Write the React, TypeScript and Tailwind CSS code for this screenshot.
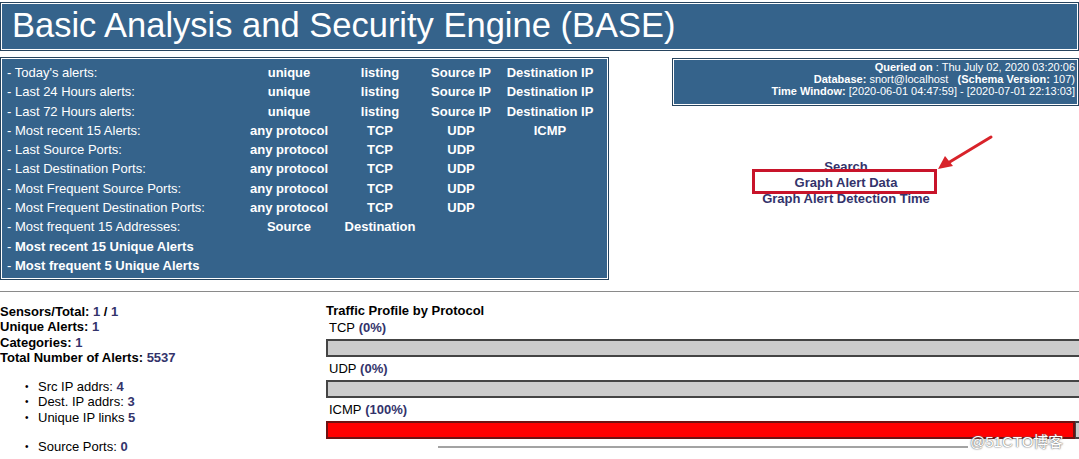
// BASE main page
const menuRows: { label: string; strong?: boolean; cols: string[] }[] = [
  { label: "Today's alerts:", cols: ["unique", "listing", "Source IP", "Destination IP"] },
  { label: "Last 24 Hours alerts:", cols: ["unique", "listing", "Source IP", "Destination IP"] },
  { label: "Last 72 Hours alerts:", cols: ["unique", "listing", "Source IP", "Destination IP"] },
  { label: "Most recent 15 Alerts:", cols: ["any protocol", "TCP", "UDP", "ICMP"] },
  { label: "Last Source Ports:", cols: ["any protocol", "TCP", "UDP"] },
  { label: "Last Destination Ports:", cols: ["any protocol", "TCP", "UDP"] },
  { label: "Most Frequent Source Ports:", cols: ["any protocol", "TCP", "UDP"] },
  { label: "Most Frequent Destination Ports:", cols: ["any protocol", "TCP", "UDP"] },
  { label: "Most frequent 15 Addresses:", cols: ["Source", "Destination"] },
  { label: "Most recent 15 Unique Alerts", strong: true, cols: [] },
  { label: "Most frequent 5 Unique Alerts", strong: true, cols: [] },
];

function Bar({ label, pct, full }: { label: string; pct: string; full?: boolean }) {
  return (
    <div>
      <div className="h-[23px] flex items-center pl-[3px] text-[13px]">
        {label}&nbsp;<span className="font-bold text-[#33336b]">({pct})</span>
      </div>
      {full ? (
        <div className="flex h-[18px]">
          <div className="w-[749px] bg-[#ff0000] border-2 border-[#6e1212]"></div>
          <div className="flex-1 bg-[#cccccc] border-y-2 border-l border-[#444]"></div>
        </div>
      ) : (
        <div className="h-[18px] bg-[#cccccc] border-y-2 border-l-2 border-[#444]"></div>
      )}
    </div>
  );
}

export default function App() {
  return (
    <div
      className="relative w-[1079px] h-[459px] overflow-hidden bg-white text-black"
      style={{ fontFamily: '"Liberation Sans", Arial, sans-serif' }}
    >
      {/* title bar */}
      <div className="pt-[2px]">
        <div className="border border-[#27445e] p-px bg-white">
          <div className="bg-[#35638b] h-[45px] flex items-center pl-[10px] pb-[2px] text-white text-[34.5px] leading-none">
            Basic Analysis and Security Engine (BASE)
          </div>
        </div>
      </div>

      <div className="flex mt-[6px]">
        {/* menu */}
        <div className="w-[609px] border border-[#27445e] p-px bg-white">
          <div className="h-[219px] bg-[#35638b] pt-[4px] text-white text-[13px]">
            {menuRows.map((r) => (
              <div key={r.label} className="grid grid-cols-[242px_90px_92px_70px_108px] h-[19.3px] items-center">
                <div className="pl-[5px] whitespace-nowrap">
                  - <span className={r.strong ? "font-bold" : ""}>{r.label}</span>
                </div>
                {r.cols.map((c) => (
                  <div key={c} className="text-center font-bold whitespace-nowrap">
                    {c}
                  </div>
                ))}
              </div>
            ))}
          </div>
        </div>

        {/* info + links */}
        <div className="flex-1 pl-[63px]">
          <div className="mt-[1px] border border-[#27445e] p-px bg-white">
            <div className="h-[44px] bg-[#35638b] text-white text-[11px] leading-[12px] text-right pr-[2px] pt-[1px]">
              <div>
                <b>Queried on</b> : Thu July 02, 2020 03:20:06
              </div>
              <div>
                <b>Database:</b> snort@localhost &nbsp; <b>(Schema Version:</b> 107)
              </div>
              <div>
                <b>Time Window:</b> [2020-06-01 04:47:59] - [2020-07-01 22:13:03]
              </div>
            </div>
          </div>
          <div className="mt-[53px] pr-[59px] text-center text-[13px] leading-[16px] font-bold text-[#33336b]">
            <div>Search</div>
            <div>Graph Alert Data</div>
            <div>Graph Alert Detection Time</div>
          </div>
        </div>
      </div>

      <div className="mt-[11px] h-px bg-[#8a8a8a]"></div>

      <div className="flex pt-[11px]">
        <div className="w-[326px] mt-px text-[13px] leading-[15.3px]">
          <div className="font-bold">
            <div>
              Sensors/Total: <span className="text-[#33336b]">1</span> / <span className="text-[#33336b]">1</span>
            </div>
            <div>
              Unique Alerts: <span className="text-[#33336b]">1</span>
            </div>
            <div>
              Categories: <span className="text-[#33336b]">1</span>
            </div>
            <div>
              Total Number of Alerts: <span className="text-[#33336b]">5537</span>
            </div>
          </div>
          <div className="mt-[14px]">
            {[
              ["Src IP addrs:", "4"],
              ["Dest. IP addrs:", "3"],
              ["Unique IP links", "5"],
            ].map(([k, v]) => (
              <div key={k} className="flex">
                <span className="w-[38px] pl-[25px] text-[10px]">•</span>
                <span>
                  {k} <b className="text-[#33336b]">{v}</b>
                </span>
              </div>
            ))}
          </div>
          <div className="mt-[14px] flex">
            <span className="w-[38px] pl-[25px] text-[10px]">•</span>
            <span>
              Source Ports: <b className="text-[#33336b]">0</b>
            </span>
          </div>
        </div>

        <div className="flex-1">
          <div className="h-[13px] text-[13px] leading-[15px] font-bold">Traffic Profile by Protocol</div>
          <Bar label="TCP" pct="0%" />
          <Bar label="UDP" pct="0%" />
          <Bar label="ICMP" pct="100%" full />
          <div className="mt-[7px] ml-[112px] w-[530px] h-[2px] bg-[#a3a3a3]"></div>
        </div>
      </div>

      {/* annotation overlays */}
      <div className="absolute left-[752px] top-[169px] w-[185px] h-[25px] border-[3px] border-[#c8142a]"></div>
      <svg className="absolute left-[930px] top-[130px]" width="70" height="45" viewBox="0 0 70 45">
        <line x1="61" y1="7" x2="18" y2="33" stroke="#d8232a" strokeWidth="3" strokeLinecap="round" />
        <polygon points="8,39 15,26 23,36" fill="#d8232a" />
      </svg>
      <div
        className="absolute left-[970px] top-[431px] text-[15px] text-white [text-shadow:0_0_2px_#666,0_0_1px_#666]"
        style={{ fontFamily: '"Liberation Sans", "Noto Sans CJK SC", sans-serif' }}
      >
        @51CTO博客
      </div>
    </div>
  );
}
